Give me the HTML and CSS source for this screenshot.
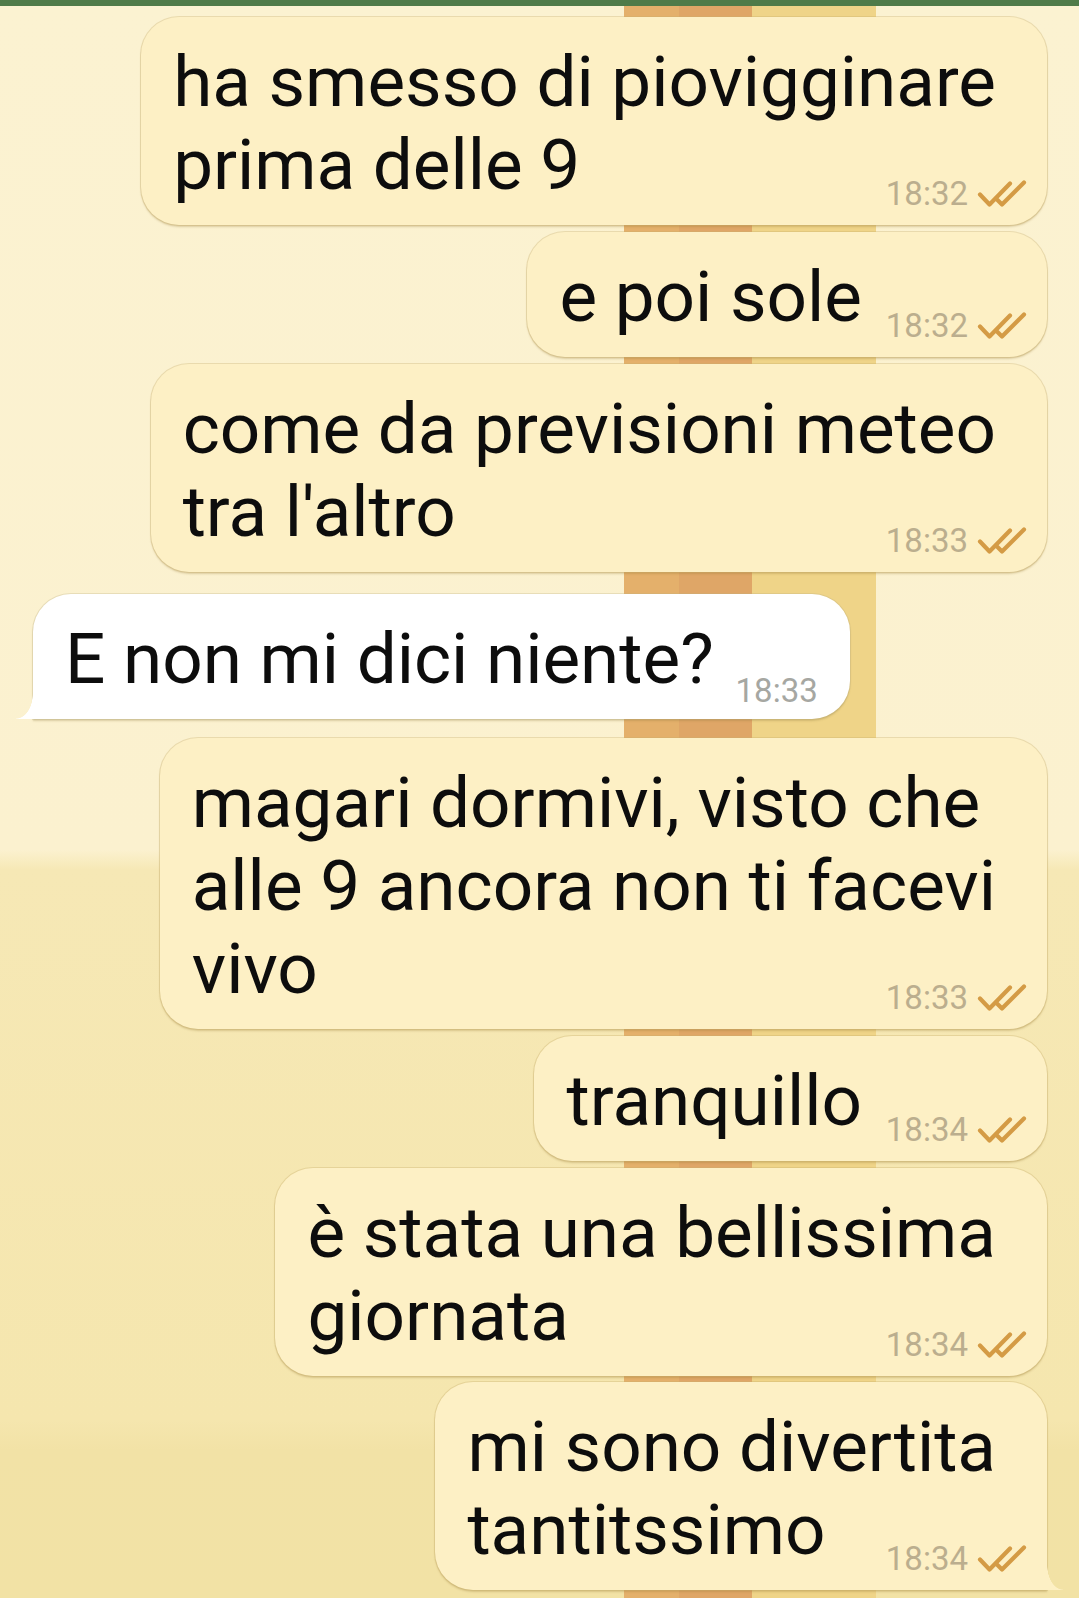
FILE: index.html
```html
<!DOCTYPE html>
<html lang="it">
<head>
<meta charset="UTF-8">
<meta name="viewport" content="width=device-width, initial-scale=1.0">
<title>Chat</title>
<link rel="stylesheet" href="styles.css">
</head>
<body>
<div class="topbar"></div>
<div class="chat">
    <div class="bubble out">
        <div class="text">ha smesso di piovigginare<br>prima delle 9<span class="pad"></span></div>
        <div class="meta"><span class="time">18:32</span><svg class="ticks" viewBox="0 0 50 28"><path d="M3 14.5 L12.5 24.5 L33 3.5 M20.5 20 L25 24.5 L47 2.5"/></svg></div>
    </div>
    <div class="bubble out">
        <div class="text">e poi sole<span class="pad"></span></div>
        <div class="meta"><span class="time">18:32</span><svg class="ticks" viewBox="0 0 50 28"><path d="M3 14.5 L12.5 24.5 L33 3.5 M20.5 20 L25 24.5 L47 2.5"/></svg></div>
    </div>
    <div class="bubble out">
        <div class="text">come da previsioni meteo<br>tra l'altro<span class="pad"></span></div>
        <div class="meta"><span class="time">18:33</span><svg class="ticks" viewBox="0 0 50 28"><path d="M3 14.5 L12.5 24.5 L33 3.5 M20.5 20 L25 24.5 L47 2.5"/></svg></div>
    </div>
    <div class="bubble in">
        <div class="text">E non mi dici niente?<span class="pad"></span></div>
        <div class="meta"><span class="time">18:33</span></div>
    </div>
    <div class="bubble out first">
        <div class="text">magari dormivi, visto che<br>alle 9 ancora non ti facevi<br>vivo<span class="pad"></span></div>
        <div class="meta"><span class="time">18:33</span><svg class="ticks" viewBox="0 0 50 28"><path d="M3 14.5 L12.5 24.5 L33 3.5 M20.5 20 L25 24.5 L47 2.5"/></svg></div>
    </div>
    <div class="bubble out">
        <div class="text">tranquillo<span class="pad"></span></div>
        <div class="meta"><span class="time">18:34</span><svg class="ticks" viewBox="0 0 50 28"><path d="M3 14.5 L12.5 24.5 L33 3.5 M20.5 20 L25 24.5 L47 2.5"/></svg></div>
    </div>
    <div class="bubble out">
        <div class="text">è stata una bellissima<br>giornata<span class="pad"></span></div>
        <div class="meta"><span class="time">18:34</span><svg class="ticks" viewBox="0 0 50 28"><path d="M3 14.5 L12.5 24.5 L33 3.5 M20.5 20 L25 24.5 L47 2.5"/></svg></div>
    </div>
    <div class="bubble out last">
        <div class="text">mi sono divertita<br>tantitssimo<span class="pad"></span></div>
        <div class="meta"><span class="time">18:34</span><svg class="ticks" viewBox="0 0 50 28"><path d="M3 14.5 L12.5 24.5 L33 3.5 M20.5 20 L25 24.5 L47 2.5"/></svg></div>
    </div>
</div>
</body>
</html>
```

FILE: styles.css
```css
body {
    margin: 0;
    height: 1598px;
    overflow: hidden;
    font-family: Roboto, "Noto Sans", sans-serif;
    background-color: #fbf1cf;
    background-image:
        linear-gradient(to right, transparent 624px, #e4b06b 624px, #e4b06b 679px, #dfa667 679px, #dfa667 752px, #efd488 752px, #efd488 876px, transparent 876px),
        linear-gradient(to bottom, #fbf2d1 0, #fbf1cf 850px, #f6e8b5 870px, #f5e6ae 1420px, #f2e2a6 1450px, #f2e2a5 1598px);
}
.topbar {
    height: 6px;
    background: #4f7b49;
}
.chat {
    display: flex;
    flex-direction: column;
    align-items: flex-end;
    padding: 11px 32px 0 33px;
}
.bubble {
    position: relative;
    display: grid;
    padding: 23px 51px 19px 32px;
    border-radius: 38px;
    background: #fdf0c5;
    box-shadow: 0 0 0 1px rgba(200, 175, 110, 0.35), 0 2px 2px rgba(150, 120, 50, 0.3);
    margin-top: 7px;
}
.bubble:first-child {
    margin-top: 0;
}
.text,
.meta {
    grid-area: 1 / 1;
}
.text {
    font-size: 71px;
    line-height: 83px;
    color: #0d0d0d;
    white-space: nowrap;
}
.pad {
    display: inline-block;
    width: 134px;
    height: 1px;
}
.meta {
    align-self: end;
    justify-self: end;
    display: flex;
    align-items: center;
    gap: 9px;
    margin-right: -31px;
    margin-bottom: -7px;
    font-size: 33px;
    line-height: 39px;
    color: #bbae8e;
}
.ticks {
    width: 50px;
    height: 28px;
    fill: none;
    stroke: #d49b45;
    stroke-width: 4.2;
    stroke-linecap: round;
    stroke-linejoin: round;
}
.bubble.in {
    align-self: flex-start;
    margin-top: 22px;
    background: #fff;
    border-bottom-left-radius: 0;
    box-shadow: 0 0 0 1px rgba(190, 175, 130, 0.3), 0 2px 2px rgba(140, 120, 60, 0.3);
}
.bubble.in .pad {
    width: 85px;
}
.bubble.in .meta {
    margin-right: -19px;
    margin-bottom: -10px;
    color: #a6a7a2;
}
.bubble.in::before {
    content: "";
    position: absolute;
    left: -17px;
    bottom: 0;
    width: 17px;
    height: 25px;
    background: radial-gradient(ellipse 17px 25px at 0 0, transparent 97%, #fff 100%);
}
.bubble.first {
    margin-top: 19px;
}
.bubble.last {
    margin-top: 6px;
    border-bottom-right-radius: 0;
}
.bubble.last::before {
    content: "";
    position: absolute;
    right: -16px;
    bottom: 0;
    width: 16px;
    height: 25px;
    background: radial-gradient(ellipse 16px 25px at 100% 0, transparent 97%, #fdf0c5 100%);
}
```
